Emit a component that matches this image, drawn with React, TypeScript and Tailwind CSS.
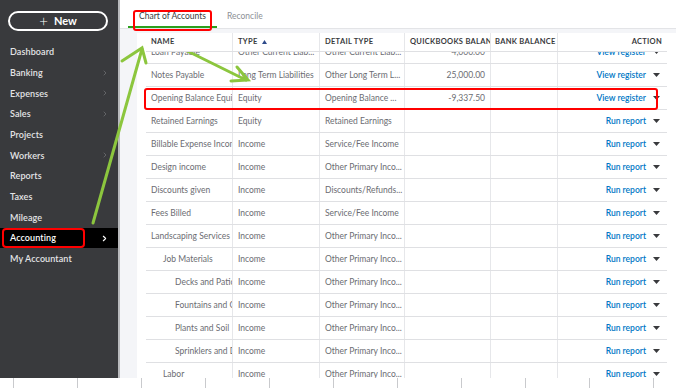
import { ChevronRight } from 'lucide-react'

const nav = [
  { label: 'Dashboard' },
  { label: 'Banking', arrow: true },
  { label: 'Expenses', arrow: true },
  { label: 'Sales', arrow: true },
  { label: 'Projects' },
  { label: 'Workers', arrow: true },
  { label: 'Reports' },
  { label: 'Taxes' },
  { label: 'Mileage' },
  { label: 'Accounting', arrow: true, active: true },
  { label: 'My Accountant' },
]

type Row = {
  name: string
  indent?: number
  type: string
  detail: string
  balance?: string
  action: string
  boxed?: boolean
}

const rows: Row[] = [
  { name: 'Notes Payable', type: 'Long Term Liabilities', detail: 'Other Long Term L...', balance: '25,000.00', action: 'View register' },
  { name: 'Opening Balance Equity', type: 'Equity', detail: 'Opening Balance ...', balance: '-9,337.50', action: 'View register', boxed: true },
  { name: 'Retained Earnings', type: 'Equity', detail: 'Retained Earnings', action: 'Run report' },
  { name: 'Billable Expense Income', type: 'Income', detail: 'Service/Fee Income', action: 'Run report' },
  { name: 'Design income', type: 'Income', detail: 'Other Primary Inco...', action: 'Run report' },
  { name: 'Discounts given', type: 'Income', detail: 'Discounts/Refunds...', action: 'Run report' },
  { name: 'Fees Billed', type: 'Income', detail: 'Service/Fee Income', action: 'Run report' },
  { name: 'Landscaping Services', type: 'Income', detail: 'Other Primary Inco...', action: 'Run report' },
  { name: 'Job Materials', indent: 1, type: 'Income', detail: 'Other Primary Inco...', action: 'Run report' },
  { name: 'Decks and Patios', indent: 2, type: 'Income', detail: 'Other Primary Inco...', action: 'Run report' },
  { name: 'Fountains and Garden Lighting', indent: 2, type: 'Income', detail: 'Other Primary Inco...', action: 'Run report' },
  { name: 'Plants and Soil', indent: 2, type: 'Income', detail: 'Other Primary Inco...', action: 'Run report' },
  { name: 'Sprinklers and Drip Systems', indent: 2, type: 'Income', detail: 'Other Primary Inco...', action: 'Run report' },
  { name: 'Labor', indent: 1, type: 'Income', detail: 'Other Primary Inco...', action: 'Run report' },
]

function Caret() {
  return (
    <svg width="7" height="4" viewBox="0 0 7 4" className="shrink-0">
      <path d="M0 0h7L3.5 4z" fill="#393a3d" />
    </svg>
  )
}

function TableRow({ row }: { row: Row }) {
  const pad = row.indent === 2 ? 'pl-[29px]' : row.indent === 1 ? 'pl-[17px]' : 'pl-[5px]'
  return (
    <div className="relative flex h-[23px] shrink-0 items-center border-b border-[#dfe0e3] text-[8.5px] text-[#6b6c72]">
      <div className={`flex h-full w-[86px] shrink-0 items-center overflow-hidden whitespace-nowrap ${pad}`}>{row.name}</div>
      <div className="flex h-full w-[87px] shrink-0 items-center overflow-hidden whitespace-nowrap border-l border-[#e6e7ea] pl-[5px]">{row.type}</div>
      <div className="flex h-full w-[85px] shrink-0 items-center overflow-hidden whitespace-nowrap border-l border-[#e6e7ea] pl-[5px]">{row.detail}</div>
      <div className="flex h-full w-[86px] shrink-0 items-center justify-end border-l border-[#e6e7ea] pr-[5px]">{row.balance}</div>
      <div className="h-full w-[67px] shrink-0 border-l border-[#e6e7ea]" />
      <div className="flex h-full w-[110px] shrink-0 items-center justify-end gap-[7px] border-l border-[#e6e7ea] pr-[7px]">
        <span className="font-semibold text-[#0077c5]">{row.action}</span>
        <Caret />
      </div>
      {row.boxed && (
        <div className="pointer-events-none absolute -left-[2px] top-[1px] h-[22px] w-[514px] rounded-[3px] border-2 border-[#ff0000]" />
      )}
    </div>
  )
}

export default function App() {
  return (
    <div className="relative flex h-[388px] w-[676px] flex-col overflow-hidden bg-white font-['Lato',sans-serif]">
      <div className="flex h-[378px] shrink-0">
        {/* Sidebar */}
        <aside className="w-[120px] shrink-0 border-r-2 border-[#b9babd] bg-[#393a3d]">
          <div className="mx-[8px] mt-[11px] flex h-[20px] w-[100px] items-center justify-center gap-[6px] rounded-full border-2 border-white text-[11px] font-bold text-white">
            <span className="text-[15px] font-light leading-none">+</span>
            <span>New</span>
          </div>
          <ul className="mt-[10.6px]">
            {nav.map((n) => (
              <li
                key={n.label}
                className={`relative flex h-[20.7px] items-center justify-between pl-[10px] pr-[9px] text-[9px] font-semibold tracking-[0.1px] ${
                  n.active ? 'bg-black text-white' : 'text-[#e4e4e6]'
                }`}
              >
                <span>{n.label}</span>
                {n.arrow && (
                  <ChevronRight
                    size={n.active ? 9 : 8}
                    strokeWidth={n.active ? 3 : 2}
                    className={n.active ? 'text-white' : 'text-[#77787c]'}
                  />
                )}
                {n.active && (
                  <div className="pointer-events-none absolute left-[2px] top-0 h-full w-[83px] rounded-[4px] border-2 border-[#ff0000]" />
                )}
              </li>
            ))}
          </ul>
        </aside>

        {/* Main */}
        <main className="flex min-w-0 flex-1 flex-col bg-[#f4f5f8]">
          <div className="flex h-[29px] shrink-0 items-end border-b border-[#e3e4e7] bg-white pl-[8px]">
            <div className="flex h-[27px] w-[89px] items-end justify-center border-b-2 border-[#2ca01c] pb-[3px] text-[8.5px] text-[#393a3d]">
              Chart of Accounts
            </div>
            <div className="flex h-[27px] items-end pb-[5px] pl-[10px] text-[8.5px] text-[#8d9096]">Reconcile</div>
          </div>

          <div className="ml-[17px] mt-[4px] flex min-h-0 flex-1 flex-col overflow-hidden bg-white pl-[9px]">
            <div className="flex w-[521px] flex-col">
              {/* Header */}
              <div className="relative z-10 flex h-[19px] shrink-0 items-center border-b border-[#dfe0e3] bg-white text-[7.5px] font-bold uppercase tracking-[0.3px] text-[#393a3d]">
                <div className="w-[86px] shrink-0 pl-[5px]">Name</div>
                <div className="flex h-full w-[87px] shrink-0 items-center gap-[4px] border-l border-[#e6e7ea] pl-[5px]">
                  Type
                  <svg width="5" height="4" viewBox="0 0 5 4">
                    <path d="M0 4h5L2.5 0z" fill="#2d4a8a" />
                  </svg>
                </div>
                <div className="flex h-full w-[85px] shrink-0 items-center border-l border-[#e6e7ea] pl-[5px]">Detail type</div>
                <div className="flex h-full w-[86px] shrink-0 items-center overflow-hidden whitespace-nowrap border-l border-[#e6e7ea] pl-[5px]">Quickbooks balance</div>
                <div className="flex h-full w-[67px] shrink-0 items-center whitespace-nowrap border-l border-[#e6e7ea] pl-[4px]">Bank balance</div>
                <div className="flex h-full w-[110px] shrink-0 items-center justify-end border-l border-[#e6e7ea] pr-[5px]">Action</div>
              </div>

              {/* Row scrolled under header */}
              <div className="h-[12px] shrink-0 overflow-hidden">
                <div className="-mt-[11px]">
                  <TableRow
                    row={{ name: 'Loan Payable', type: 'Other Current Liab...', detail: 'Other Current Liab...', balance: '4,000.00', action: 'View register' }}
                  />
                </div>
              </div>

              {rows.map((r) => (
                <TableRow key={r.name} row={r} />
              ))}
            </div>
          </div>
        </main>
      </div>

      {/* bottom strip */}
      <div className="flex h-[10px] shrink-0 bg-white pl-[13px]">
        {Array.from({ length: 11 }).map((_, i) => (
          <div key={i} className="h-full w-[64px] shrink-0 border-l border-[#c9cacd]" />
        ))}
      </div>

      {/* annotations */}
      <div className="pointer-events-none absolute left-[133px] top-[10px] h-[21px] w-[79px] rounded-[3px] border-2 border-[#ff0000]" />
      <svg className="pointer-events-none absolute left-0 top-0" width="676" height="388" viewBox="0 0 676 388">
        <g stroke="#8cc63e" strokeWidth="3" strokeLinecap="round" fill="none">
          <path d="M93 223L142 49" />
          <path d="M122 61L142 48L146 63" />
          <path d="M165 40L246 80" />
          <path d="M237 67L248 80L231 81" />
        </g>
      </svg>
    </div>
  )
}
